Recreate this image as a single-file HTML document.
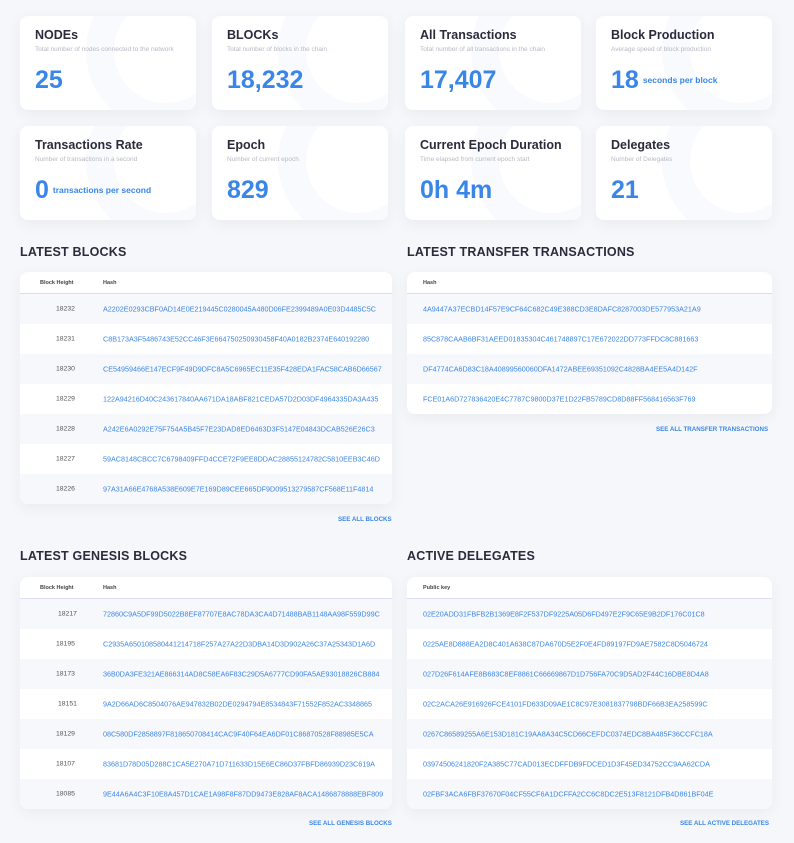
<!DOCTYPE html>
<html><head><meta charset="utf-8"><style>
*{box-sizing:border-box;margin:0;padding:0}
body{width:794px;height:843px;background:#f6f7fa;font-family:"Liberation Sans",sans-serif;position:relative;overflow:hidden;color:#2b2b3c}
.card{position:absolute;width:176px;height:94px;background:#fff;border-radius:8px;box-shadow:0 4px 14px rgba(40,50,90,.06);overflow:hidden}
.card .ring{position:absolute;right:-50px;top:-45px;width:160px;height:160px;border-radius:50%;border:28px solid #f8fafd}
.card h3{position:absolute;left:15px;top:12px;font-size:12.5px;font-weight:bold;color:#2b2b3c}
.card p{position:absolute;left:15px;top:29px;font-size:6.5px;color:#b8b8c4;width:150px;line-height:9px}
.card .n{position:absolute;left:15px;top:50px;font-size:25px;font-weight:bold;color:#3a86e8}
.card .n span{font-size:8.5px;margin-left:4px;vertical-align:5px}
.sec{position:absolute;font-size:12.5px;font-weight:bold;color:#2b2b3c;letter-spacing:.2px}
.tbl{position:absolute;background:#fff;border-radius:8px;box-shadow:0 4px 14px rgba(40,50,90,.06);overflow:hidden}
.hd{height:22px;border-bottom:1px solid #dcdcea;font-size:5.5px;font-weight:bold;color:#444;position:relative}
.row{height:30px;position:relative;font-size:7.2px}
.row:nth-child(even){background:#f7f8fc}
.hd span,.row span{position:absolute;top:50%;transform:translateY(-50%);white-space:nowrap}
.h{color:#3a86e8}
.num{color:#555;font-size:6.8px}
.see{position:absolute;font-size:6.2px;font-weight:bold;color:#3a86e8}
</style></head><body>

<div class="card" style="left:20px;top:16px"><div class="ring"></div><h3>NODEs</h3><p>Total number of nodes connected to the network</p><div class="n">25</div></div>
<div class="card" style="left:212px;top:16px"><div class="ring"></div><h3>BLOCKs</h3><p>Total number of blocks in the chain</p><div class="n">18,232</div></div>
<div class="card" style="left:405px;top:16px"><div class="ring"></div><h3>All Transactions</h3><p>Total number of all transactions in the chain</p><div class="n">17,407</div></div>
<div class="card" style="left:596px;top:16px"><div class="ring"></div><h3>Block Production</h3><p>Average speed of block production</p><div class="n">18<span>seconds per block</span></div></div>
<div class="card" style="left:20px;top:126px"><div class="ring"></div><h3>Transactions Rate</h3><p>Number of transactions in a second</p><div class="n">0<span>transactions per second</span></div></div>
<div class="card" style="left:212px;top:126px"><div class="ring"></div><h3>Epoch</h3><p>Number of current epoch</p><div class="n">829</div></div>
<div class="card" style="left:405px;top:126px"><div class="ring"></div><h3>Current Epoch Duration</h3><p>Time elapsed from current epoch start</p><div class="n">0h 4m</div></div>
<div class="card" style="left:596px;top:126px"><div class="ring"></div><h3>Delegates</h3><p>Number of Delegates</p><div class="n">21</div></div>

<div class="sec" style="left:20px;top:245px">LATEST BLOCKS</div>
<div class="tbl" style="left:20px;top:272px;width:372px">
<div class="hd"><span style="left:20px">Block Height</span><span style="left:83px">Hash</span></div>
<div class="row"><span class="num" style="left:36px">18232</span><span class="h" style="left:83px">A2202E0293CBF0AD14E0E219445C0280045A480D06FE2399489A0E03D4485C5C</span></div>
<div class="row"><span class="num" style="left:36px">18231</span><span class="h" style="left:83px">C8B173A3F5486743E52CC46F3E664750250930458F40A0182B2374E640192280</span></div>
<div class="row"><span class="num" style="left:36px">18230</span><span class="h" style="left:83px">CE54959466E147ECF9F49D9DFC8A5C6965EC11E35F428EDA1FAC58CAB6D66567</span></div>
<div class="row"><span class="num" style="left:36px">18229</span><span class="h" style="left:83px">122A94216D40C243617840AA671DA18ABF821CEDA57D2D03DF4964335DA3A435</span></div>
<div class="row"><span class="num" style="left:36px">18228</span><span class="h" style="left:83px">A242E6A0292E75F754A5B45F7E23DAD8ED6463D3F5147E04843DCAB526E26C3</span></div>
<div class="row"><span class="num" style="left:36px">18227</span><span class="h" style="left:83px">59AC8148CBCC7C6798409FFD4CCE72F9EE8DDAC28855124782C5810EEB3C46D</span></div>
<div class="row"><span class="num" style="left:36px">18226</span><span class="h" style="left:83px">97A31A66E4768A538E609E7E169D89CEE665DF9D09513279587CF568E11F4814</span></div>
</div>
<div class="see" style="left:338px;top:516px">SEE ALL BLOCKS</div>

<div class="sec" style="left:407px;top:245px">LATEST TRANSFER TRANSACTIONS</div>
<div class="tbl" style="left:407px;top:272px;width:365px">
<div class="hd"><span style="left:16px">Hash</span></div>
<div class="row"><span class="h" style="left:16px">4A9447A37ECBD14F57E9CF64C682C49E388CD3E8DAFC8287003DE577953A21A9</span></div>
<div class="row"><span class="h" style="left:16px">85C878CAAB6BF31AEED01835304C461748897C17E672022DD773FFDC8C881663</span></div>
<div class="row"><span class="h" style="left:16px">DF4774CA6D83C18A40899560060DFA1472ABEE69351092C4828BA4EE5A4D142F</span></div>
<div class="row"><span class="h" style="left:16px">FCE01A6D727836420E4C7787C9800D37E1D22FB5789CD8D88FF568416563F769</span></div>
</div>
<div class="see" style="left:656px;top:426px">SEE ALL TRANSFER TRANSACTIONS</div>

<div class="sec" style="left:20px;top:549px">LATEST GENESIS BLOCKS</div>
<div class="tbl" style="left:20px;top:577px;width:372px">
<div class="hd"><span style="left:20px">Block Height</span><span style="left:83px">Hash</span></div>
<div class="row"><span class="num" style="left:38px">18217</span><span class="h" style="left:83px">72860C9A5DF99D5022B8EF87707E8AC78DA3CA4D71488BAB1148AA98F559D99C</span></div>
<div class="row"><span class="num" style="left:36px">18195</span><span class="h" style="left:83px">C2935A650108580441214718F257A27A22D3DBA14D3D902A26C37A25343D1A6D</span></div>
<div class="row"><span class="num" style="left:36px">18173</span><span class="h" style="left:83px">36B0DA3FE321AE866314AD8C58EA6F83C29D5A6777CD90FA5AE93018826CB884</span></div>
<div class="row"><span class="num" style="left:38px">18151</span><span class="h" style="left:83px">9A2D66AD6C8504076AE947832B02DE0294794E8534843F71552F852AC3348865</span></div>
<div class="row"><span class="num" style="left:36px">18129</span><span class="h" style="left:83px">08C580DF2858897F818650708414CAC9F40F64EA6DF01C86870528F88985E5CA</span></div>
<div class="row"><span class="num" style="left:36px">18107</span><span class="h" style="left:83px">83681D78D05D288C1CA5E270A71D711633D15E6EC86D37FBFD86939D23C619A</span></div>
<div class="row"><span class="num" style="left:36px">18085</span><span class="h" style="left:83px">9E44A6A4C3F10E8A457D1CAE1A98F8F87DD9473E828AF8ACA1486878888EBF809</span></div>
</div>
<div class="see" style="left:309px;top:820px">SEE ALL GENESIS BLOCKS</div>

<div class="sec" style="left:407px;top:549px">ACTIVE DELEGATES</div>
<div class="tbl" style="left:407px;top:577px;width:365px">
<div class="hd"><span style="left:16px">Public key</span></div>
<div class="row"><span class="h" style="left:16px">02E20ADD31FBFB2B1369E8F2F537DF9225A05D6FD497E2F9C65E9B2DF176C01C8</span></div>
<div class="row"><span class="h" style="left:16px">0225AE8D888EA2D8C401A638C87DA670D5E2F0E4FD89197FD9AE7582C8D5046724</span></div>
<div class="row"><span class="h" style="left:16px">027D26F614AFE8B683C8EF8861C66669867D1D756FA70C9D5AD2F44C16DBE8D4A8</span></div>
<div class="row"><span class="h" style="left:16px">02C2ACA26E916926FCE4101FD633D09AE1C8C97E3081837798BDF66B3EA258599C</span></div>
<div class="row"><span class="h" style="left:16px">0267C86589255A6E153D181C19AA8A34C5CD66CEFDC0374EDC8BA485F36CCFC18A</span></div>
<div class="row"><span class="h" style="left:16px">03974506241820F2A385C77CAD013ECDFFDB9FDCED1D3F45ED34752CC9AA62CDA</span></div>
<div class="row"><span class="h" style="left:16px">02FBF3ACA6FBF37670F04CF55CF6A1DCFFA2CC6C8DC2E513F8121DFB4D861BF04E</span></div>
</div>
<div class="see" style="left:680px;top:820px">SEE ALL ACTIVE DELEGATES</div>
</body></html>
